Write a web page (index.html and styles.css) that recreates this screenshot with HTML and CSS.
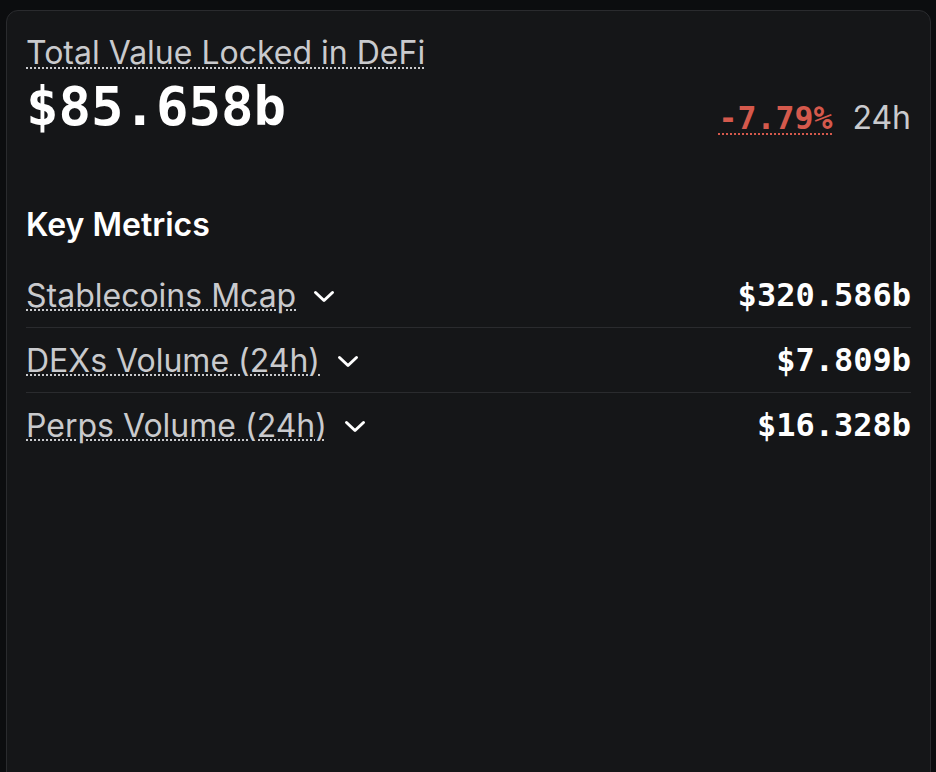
FILE: index.html
```html
<!DOCTYPE html>
<html lang="en">
<head>
<meta charset="utf-8">
<link rel="stylesheet" href="styles.css">
</head>
<body>
<div class="card">
  <div class="tvl">
    <span class="tvl-label">Total Value Locked in DeFi</span>
    <div class="tvl-row">
      <span class="tvl-value">$85.658b</span>
      <span class="change"><span class="pct">-7.79%</span><span class="period">24h</span></span>
    </div>
  </div>
  <h2 class="section-title">Key Metrics</h2>
  <div class="metrics">
    <div class="metric">
      <span class="metric-name"><span class="metric-label">Stablecoins Mcap</span>
        <svg class="chev" viewBox="0 0 22 13" width="22" height="13"><path d="M2.5 2.5 L11 10.5 L19.5 2.5" fill="none" stroke="#fff" stroke-width="3" stroke-linecap="round" stroke-linejoin="round"/></svg></span>
      <span class="metric-value">$320.586b</span>
    </div>
    <div class="metric">
      <span class="metric-name"><span class="metric-label">DEXs Volume (24h)</span>
        <svg class="chev" viewBox="0 0 22 13" width="22" height="13"><path d="M2.5 2.5 L11 10.5 L19.5 2.5" fill="none" stroke="#fff" stroke-width="3" stroke-linecap="round" stroke-linejoin="round"/></svg></span>
      <span class="metric-value">$7.809b</span>
    </div>
    <div class="metric">
      <span class="metric-name"><span class="metric-label">Perps Volume (24h)</span>
        <svg class="chev" viewBox="0 0 22 13" width="22" height="13"><path d="M2.5 2.5 L11 10.5 L19.5 2.5" fill="none" stroke="#fff" stroke-width="3" stroke-linecap="round" stroke-linejoin="round"/></svg></span>
      <span class="metric-value">$16.328b</span>
    </div>
  </div>
</div>
</body>
</html>
```
FILE: styles.css
```css
html, body {
  margin: 0;
  padding: 0;
  background: #0c0d0f;
  height: 100%;
  overflow: hidden;
}
body {
  padding: 10px 5px 0 6px;
  box-sizing: border-box;
  font-family: Inter, "Noto Sans", sans-serif;
}
.card {
  background: #151618;
  border: 1px solid #2a2b2e;
  border-radius: 12px;
  min-height: 800px;
  padding: 23px 19px 0 19px;
  box-sizing: border-box;
}
.tvl-label {
  display: inline-block;
  font-size: 32px;
  color: #c9cacd;
  text-decoration: underline dotted #c9cacd;
  text-decoration-thickness: 2px;
  text-underline-offset: 3px;
  line-height: 38px;
}
.tvl-row {
  display: flex;
  justify-content: space-between;
  align-items: baseline;
  margin-top: 3px;
}
.tvl-value {
  font-family: "DejaVu Sans Mono", monospace;
  font-weight: bold;
  font-size: 54px;
  color: #ffffff;
  line-height: 64px;
}
.change {
  display: flex;
  align-items: baseline;
  gap: 20px;
  position: relative;
  top: 4px;
}
.pct {
  font-family: "DejaVu Sans Mono", monospace;
  font-weight: bold;
  font-size: 31.5px;
  color: #d5594c;
  text-decoration: underline dotted #d5594c;
  text-decoration-thickness: 2px;
  text-underline-offset: 4px;
}
.period {
  font-size: 32px;
  color: #c9cacd;
}
.section-title {
  margin: 66px 0 0 0;
  font-size: 32px;
  font-weight: 600;
  color: #ffffff;
  line-height: 40px;
}
.metrics {
  margin-top: 18px;
}
.metric {
  display: flex;
  justify-content: space-between;
  align-items: center;
  height: 64px;
  border-bottom: 1px solid #2a2b2e;
}
.metric:last-child {
  border-bottom: none;
}
.metric-name {
  display: flex;
  align-items: center;
  gap: 17px;
}
.metric-label {
  font-size: 32px;
  color: #c9cacd;
  text-decoration: underline dotted #c9cacd;
  text-decoration-thickness: 2px;
  text-underline-offset: 3px;
}
.metric-value {
  font-family: "DejaVu Sans Mono", monospace;
  font-weight: bold;
  font-size: 32px;
  color: #ffffff;
}
.chev {
  display: block;
  margin-top: 2px;
}
```
